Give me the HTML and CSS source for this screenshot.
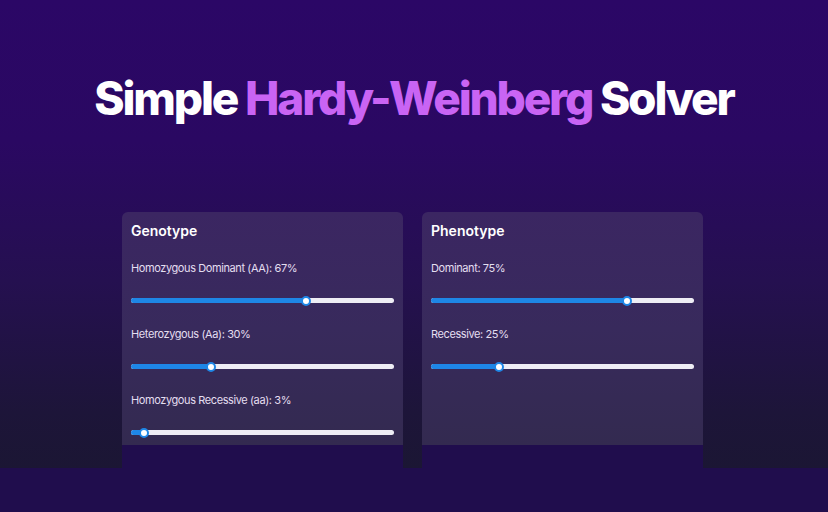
FILE: index.html
```html
<!DOCTYPE html>
<html>
<head>
<meta charset="utf-8">
<link rel="stylesheet" href="styles.css">
</head>
<body>
<main class="page">
  <h1 class="title">Simple <span class="accent">Hardy-Weinberg</span> Solver</h1>
  <section class="panels">
    <div class="panel-wrap">
      <div class="card">
        <h2 class="card-title">Genotype</h2>
        <div class="field">
          <div class="label">Homozygous Dominant (AA): 67%</div>
          <div class="slider"><div class="fill" style="width:66.5%"><div class="thumb"></div></div></div>
        </div>
        <div class="field">
          <div class="label">Heterozygous (Aa): 30%</div>
          <div class="slider"><div class="fill" style="width:30.5%"><div class="thumb"></div></div></div>
        </div>
        <div class="field">
          <div class="label">Homozygous Recessive (aa): 3%</div>
          <div class="slider"><div class="fill" style="width:5%"><div class="thumb"></div></div></div>
        </div>
      </div>
    </div>
    <div class="panel-wrap">
      <div class="card">
        <h2 class="card-title">Phenotype</h2>
        <div class="field">
          <div class="label">Dominant: 75%</div>
          <div class="slider"><div class="fill" style="width:74.5%"><div class="thumb"></div></div></div>
        </div>
        <div class="field">
          <div class="label">Recessive: 25%</div>
          <div class="slider"><div class="fill" style="width:26%"><div class="thumb"></div></div></div>
        </div>
      </div>
    </div>
  </section>
</main>
<div class="base"></div>
</body>
</html>
```
FILE: styles.css
```css
html, body {
  margin: 0;
  padding: 0;
}
body {
  background: #200d4d;
  font-family: Inter, "Noto Sans", sans-serif;
  height: 512px;
  overflow: hidden;
}
.page {
  height: 468px;
  background: linear-gradient(180deg, #2b0766 0%, #2a0862 30%, #251050 60%, #1d1539 88%, #1b1634 100%);
  display: flex;
  flex-direction: column;
  align-items: center;
}
.title {
  margin: 70px 0 0;
  font-size: 46px;
  font-weight: 800;
  letter-spacing: -2.2px;
  color: #ffffff;
  line-height: 56px;
}
.accent {
  color: #c964f4;
}
.panels {
  margin-top: 86px;
  display: flex;
  gap: 19px;
  align-items: flex-start;
  margin-left: -3px;
}
.panel-wrap {
  width: 281px;
}
.card {
  height: 233px;
  box-sizing: border-box;
  padding: 12px 9px 0;
  background: linear-gradient(180deg, #3b2662 0%, #382a5c 50%, #332a50 100%);
  border-radius: 6px 6px 0 0;
  box-shadow: 0 23px 0 0 #200d4d;
}
.card-title {
  margin: 0;
  font-size: 14px;
  font-weight: 600;
  color: #ffffff;
  line-height: 14px;
}
.field {
  margin-top: 23px;
  height: 43px;
}
.label {
  font-size: 11px;
  line-height: 14px;
  letter-spacing: -0.4px;
  color: #e4def0;
}
.slider {
  margin-top: 23px;
  height: 5px;
  border-radius: 3px;
  background: #eeedf4;
}
.fill {
  position: relative;
  height: 5px;
  border-radius: 3px 0 0 3px;
  background: #1e86e6;
}
.thumb {
  position: absolute;
  top: -2.5px;
  right: -5px;
  width: 6px;
  height: 6px;
  border: 2px solid #1e86e6;
  border-radius: 50%;
  background: #ffffff;
}
.base {
  height: 44px;
  background: #200d4d;
}
```
